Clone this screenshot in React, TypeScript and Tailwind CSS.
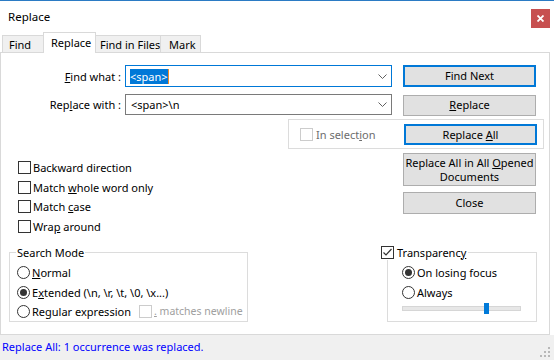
import React from "react";

const Check = ({ checked = false, disabled = false }: { checked?: boolean; disabled?: boolean }) => (
  <span
    className={
      disabled
        ? "w-[13px] h-[13px] border border-[#cccccc] bg-white flex items-center justify-center shrink-0"
        : "w-[13px] h-[13px] border border-[#333333] bg-white flex items-center justify-center shrink-0"
    }
  >
    {checked && (
      <svg width="11" height="11" viewBox="0 0 11 11">
        <polyline points="1.5,5.5 4,8 9.5,2" fill="none" stroke="#333333" strokeWidth="1.2" />
      </svg>
    )}
  </span>
);

const Radio = ({ checked = false }: { checked?: boolean }) => (
  <span className="w-[13px] h-[13px] rounded-full border border-[#333333] bg-white flex items-center justify-center shrink-0">
    {checked && <span className="w-[7px] h-[7px] rounded-full bg-[#333333]" />}
  </span>
);

const Chevron = () => (
  <svg width="9" height="5" viewBox="0 0 9 5" className="shrink-0">
    <polyline points="0.5,0.5 4.5,4.5 8.5,0.5" fill="none" stroke="#606060" strokeWidth="1" />
  </svg>
);

const Btn = ({
  children,
  focused = false,
  className = "",
}: {
  children: React.ReactNode;
  focused?: boolean;
  className?: string;
}) => (
  <div
    className={
      (focused
        ? "border-2 border-[#0078d7] "
        : "border border-[#adadad] ") +
      "bg-[#e1e1e1] flex items-center justify-center text-center leading-[14px] shrink-0 whitespace-nowrap " +
      className
    }
  >
    {children}
  </div>
);

export default function App() {
  return (
    <div className="w-[554px] h-[360px] bg-white text-black text-[11px] leading-[15px] whitespace-nowrap font-['Noto_Sans',sans-serif] flex flex-col overflow-hidden">
      {/* top accent line */}
      <div className="h-[1px] bg-[#2b7bc4] shrink-0" />
      {/* title bar */}
      <div className="h-[31px] flex items-start shrink-0">
        <span className="ml-[8px] mt-[8px] text-[11.5px] leading-[16px]">Replace</span>
        <div className="ml-auto mr-[4px] mt-[8px] w-[19px] h-[19px] bg-[#c75050] flex items-center justify-center">
          <svg width="7" height="7" viewBox="0 0 7 7">
            <path d="M0.5 0.5 L6.5 6.5 M6.5 0.5 L0.5 6.5" stroke="white" strokeWidth="1.8" />
          </svg>
        </div>
      </div>
      {/* tabs */}
      <div className="h-[20px] flex items-end shrink-0">
        <div className="ml-[2px] w-[42px] h-[17px] border border-b-0 border-[#d9d9d9] bg-[#f0f0f0] pl-[6px] pt-[1px]">Find</div>
        <div className="-ml-[1px] w-[53px] h-[21px] -mb-[1px] border border-b-0 border-[#d9d9d9] bg-white relative z-10 pl-[7px] pt-[2px]">Replace</div>
        <div className="-ml-[1px] w-[66px] h-[17px] border border-b-0 border-[#d9d9d9] bg-[#f0f0f0] pl-[4px] pt-[1px]">Find in Files</div>
        <div className="-ml-[1px] w-[41px] h-[17px] border border-b-0 border-[#d9d9d9] bg-[#f0f0f0] pl-[8px] pt-[1px]">Mark</div>
      </div>
      {/* panel */}
      <div className="w-[550px] h-[283px] border border-[#d9d9d9] bg-white flex flex-col shrink-0">
        {/* row 1 */}
        <div className="flex items-center mt-[12px] h-[22px]">
          <div className="w-[120px] text-right">
            <span className="underline">F</span>ind what :
          </div>
          <div className="ml-[4px] w-[267px] h-[22px] border border-[#0078d7] flex items-center pl-[4px] pr-[4px]">
            <span className="bg-[#0078d7] text-white leading-[15px]">&lt;span&gt;</span>
            <span className="w-[1px] h-[15px] bg-[#f08a24]" />
            <span className="ml-auto">
              <Chevron />
            </span>
          </div>
          <Btn focused className="ml-[11px] w-[133px] h-[22px]">Find Next</Btn>
        </div>
        {/* row 2 */}
        <div className="flex items-center mt-[7px] h-[21px]">
          <div className="w-[120px] text-right">
            Rep<span className="underline">l</span>ace with :
          </div>
          <div className="ml-[4px] w-[267px] h-[21px] border border-[#7a7a7a] flex items-center pl-[5px] pr-[4px]">
            <span>&lt;span&gt;\n</span>
            <span className="ml-auto">
              <Chevron />
            </span>
          </div>
          <Btn className="ml-[11px] w-[133px] h-[21px] mt-[1px]">
            <span>
              <span className="underline">R</span>eplace
            </span>
          </Btn>
        </div>
        {/* in selection box */}
        <div className="ml-[287px] mt-[4px] w-[256px] h-[30px] border border-[#dcdcdc] flex items-center">
          <div className="ml-[11px] flex items-center gap-[3px] text-[#6d6d6d]">
            <Check disabled />
            <span>
              In select<span className="underline">i</span>on
            </span>
          </div>
          <Btn focused className="ml-auto mr-[6px] w-[133px] h-[21px] mt-[1px]">
            <span>
              Replace <span className="underline">A</span>ll
            </span>
          </Btn>
        </div>
        {/* middle row */}
        <div className="flex h-[96px]">
          <div className="w-[402px] pl-[17px] pt-[9px] flex flex-col">
            {[
              <>Backward direction</>,
              <>
                Match <span className="underline">w</span>hole word only
              </>,
              <>
                Match <span className="underline">c</span>ase
              </>,
              <>
                Wra<span className="underline">p</span> around
              </>,
            ].map((t, i) => (
              <div key={i} className="h-[19.5px] flex items-center gap-[2px]">
                <Check />
                <span>{t}</span>
              </div>
            ))}
          </div>
          <div className="pt-[4px] flex flex-col">
            <Btn className="w-[133px] h-[33px]">
              <span>
                Replace All in All <span className="underline">O</span>pened
                <br />
                Documents
              </span>
            </Btn>
            <Btn className="mt-[6px] w-[133px] h-[22px]">Close</Btn>
          </div>
        </div>
        {/* bottom row */}
        <div className="flex">
          {/* search mode */}
          <div className="ml-[8px] w-[239px] flex flex-col">
            <div className="h-[14px] flex items-center relative z-10">
              <span className="ml-[7px] px-[1px] bg-white">Search Mode</span>
            </div>
            <div className="-mt-[7px] h-[70px] border border-[#dcdcdc] pt-[9px] pl-[7px] flex flex-col">
              <div className="h-[20px] flex items-center gap-[2px]">
                <Radio />
                <span>
                  <span className="underline">N</span>ormal
                </span>
              </div>
              <div className="h-[20px] flex items-center gap-[2px]">
                <Radio checked />
                <span>
                  E<span className="underline">x</span>tended (\n, \r, \t, \0, \x...)
                </span>
              </div>
              <div className="h-[19px] flex items-center">
                <div className="w-[122px] flex items-center gap-[2px]">
                  <Radio />
                  <span>
                    Re<span className="underline">g</span>ular expression
                  </span>
                </div>
                <div className="flex items-center gap-[2px] text-[#a0a0a0] text-[10.5px]">
                  <Check disabled />
                  <span>
                    <span className="underline">.</span> matches newline
                  </span>
                </div>
              </div>
            </div>
          </div>
          {/* transparency */}
          <div className="ml-[139px] w-[150px] flex flex-col">
            <div className="h-[14px] flex items-center relative z-10">
              <span className="-ml-[6px] pr-[2px] bg-white flex items-center gap-[3px]">
                <Check checked />
                <span>
                  Transparenc<span className="underline">y</span>
                </span>
              </span>
            </div>
            <div className="-mt-[7px] h-[70px] border border-[#dcdcdc] pt-[9px] pl-[14px] flex flex-col">
              <div className="h-[20px] flex items-center gap-[2px]">
                <Radio checked />
                <span>On losing focus</span>
              </div>
              <div className="h-[20px] flex items-center gap-[2px]">
                <Radio />
                <span>Always</span>
              </div>
              <div className="mt-[1px] h-[11px] w-[119px] flex items-center">
                <div className="w-[119px] h-[5px] bg-[#e7e7e7] border border-[#d6d6d6] flex items-center">
                  <div className="ml-[81px] w-[5px] h-[11px] bg-[#007ad9] shrink-0" />
                </div>
              </div>
            </div>
          </div>
        </div>
      </div>
      {/* status bar */}
      <div className="flex-1 bg-[#f0f0f0] flex items-start">
        <span className="ml-[2px] mt-[4px] text-[11px] leading-[16px] text-[#0000ff]">Replace All: 1 occurrence was replaced.</span>
        <svg width="10" height="10" viewBox="0 0 10 10" className="ml-auto mr-[4px] mt-[12px]">
          {[
            [8, 0],
            [8, 4],
            [4, 4],
            [8, 8],
            [4, 8],
            [0, 8],
          ].map(([x, y], i) => (
            <rect key={i} x={x} y={y} width="2" height="2" fill="#b8b8b8" />
          ))}
        </svg>
      </div>
    </div>
  );
}
